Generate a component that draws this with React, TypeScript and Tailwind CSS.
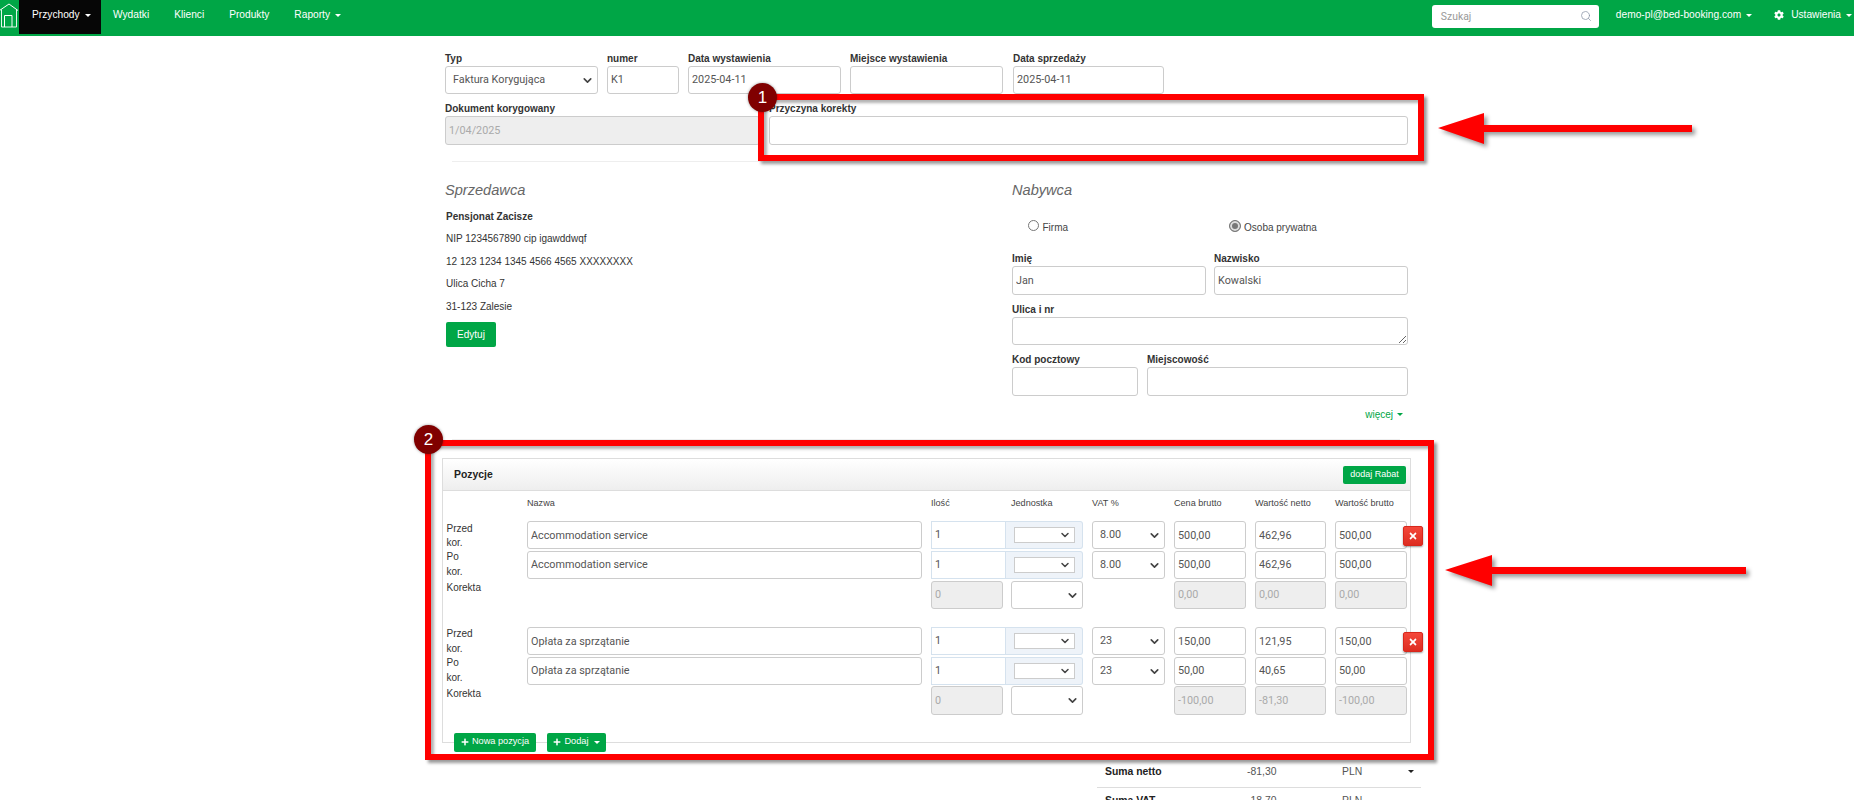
import React from "react";
import { FaCog, FaPlus, FaTimes } from "react-icons/fa";
import { Search, ChevronDown } from "lucide-react";

const Caret = ({ c = "border-t-white", cls = "" }: { c?: string; cls?: string }) => (
  <span className={`inline-block w-0 h-0 border-x-[3px] border-t-[3px] border-x-transparent ${c} ${cls}`} />
);

const inputBase =
  "w-full h-full rounded-[3px] border border-[#ccc] px-[3px] text-[10.8px] [font-family:Roboto,sans-serif] outline-none";

const Input = ({ value = "", dis = false, cls = "h-[29px]", w = "w-full" }: { value?: string; dis?: boolean; cls?: string; w?: string }) => (
  <div className={`${w} ${cls}`}>
    <input readOnly value={value} className={`${inputBase} ${dis ? "bg-[#eee] text-[#aaa]" : "bg-white text-[#555]"}`} />
  </div>
);

const Select = ({ value = "", cls = "h-[29px]", w = "w-full", pl = "pl-[7px]" }: { value?: string; cls?: string; w?: string; pl?: string }) => (
  <div className={`relative ${w} ${cls}`}>
    <select
      defaultValue={value}
      className={`${inputBase} ${pl} bg-white text-[#555] appearance-none`}
    >
      <option>{value}</option>
    </select>
    <ChevronDown size={13} strokeWidth={3} className="absolute right-[4px] top-[8px] text-[#444] pointer-events-none" />
  </div>
);

const Label = ({ children }: { children: React.ReactNode }) => (
  <div className="h-[14px] leading-[14px] text-[10px] text-[#333] whitespace-nowrap font-bold">{children}</div>
);

const Field = ({ label, w, children }: { label: string; w: string; children: React.ReactNode }) => (
  <div className={`${w} shrink-0`}>
    <Label>{label}</Label>
    {children}
  </div>
);

const NavItem = ({ label, caret = false, ml = "" }: { label: string; caret?: boolean; ml?: string }) => (
  <span className={`text-white text-[10.2px] ${ml} flex items-center gap-[5px] h-[30px] whitespace-nowrap`}>
    {label}
    {caret && <Caret />}
  </span>
);

const rowH = "h-[28.3px]";

const Unit = () => (
  <div className={`flex ${rowH} w-full`}>
    <div className="w-[75px] h-full border border-[#d5e2ee] flex items-center px-[3px] text-[10.8px] text-[#555] [font-family:Roboto,sans-serif] bg-white">1</div>
    <div className="flex-1 h-full border border-l-0 border-[#d5e2ee] bg-[#eef3f9] flex items-center justify-center rounded-r-[3px]">
      <div className="relative w-[61px] h-[16px] border border-[#ccc] bg-white">
        <ChevronDown size={12} strokeWidth={3} className="absolute right-[3px] top-[1px] text-[#444]" />
      </div>
    </div>
  </div>
);

type Item = {
  name: string;
  vat: string;
  before: [string, string, string];
  after: [string, string, string];
  diff: [string, string, string];
};

const cols = "grid grid-cols-[75px_395px_152px_73px_72px_71px_72px] gap-x-[9px]";

const PositionItem = ({ item }: { item: Item }) => (
  <div className={`relative ${cols}`}>
    <div className="pl-[3.5px] text-[10px] text-[#333] leading-[14.4px] mt-[0.5px]">
      <div className="w-[30px]">Przed kor.</div>
      <div className="w-[30px]">Po kor.</div>
      <div className="mt-[1.5px]">Korekta</div>
    </div>
    <div className="flex flex-col gap-[1.5px]">
      <Input value={item.name} cls={rowH} />
      <Input value={item.name} cls={rowH} />
    </div>
    <div className="flex flex-col gap-[1.5px]">
      <Unit />
      <Unit />
      <div className={`flex ${rowH} justify-between`}>
        <Input value="0" dis w="w-[72px]" cls="h-full" />
        <Select w="w-[72px]" cls="h-full" />
      </div>
    </div>
    <div className="flex flex-col gap-[1.5px]">
      <Select value={item.vat} cls={rowH} />
      <Select value={item.vat} cls={rowH} />
    </div>
    {[0, 1, 2].map((i) => (
      <div key={i} className="flex flex-col gap-[1.5px]">
        <Input value={item.before[i]} cls={rowH} />
        <Input value={item.after[i]} cls={rowH} />
        <Input value={item.diff[i]} dis cls={rowH} />
      </div>
    ))}
    <button className="absolute left-[960px] top-[5px] w-[20px] h-[20px] rounded-[2px] bg-gradient-to-b from-[#f4473a] to-[#dd2c20] border border-[#d8271c] shadow-[0_1px_2px_rgba(0,0,0,0.4)] flex items-center justify-center text-white">
      <FaTimes size={10} />
    </button>
  </div>
);

const Badge = ({ n, cls }: { n: string; cls: string }) => (
  <div className={`absolute w-[29px] h-[29px] rounded-full bg-[#800000] text-white flex items-center justify-center text-[17px] shadow-[0_0_3px_rgba(0,0,0,0.4)] ${cls}`}>
    {n}
  </div>
);

const items: Item[] = [
  {
    name: "Accommodation service",
    vat: "8.00",
    before: ["500,00", "462,96", "500,00"],
    after: ["500,00", "462,96", "500,00"],
    diff: ["0,00", "0,00", "0,00"],
  },
  {
    name: "Opłata za sprzątanie",
    vat: "23",
    before: ["150,00", "121,95", "150,00"],
    after: ["50,00", "40,65", "50,00"],
    diff: ["-100,00", "-81,30", "-100,00"],
  },
];

const boxShadow = "shadow-[3px_3px_3px_rgba(0,0,0,0.4),inset_3px_3px_3px_rgba(0,0,0,0.3)]";

export default function App() {
  return (
    <div className="relative w-[1854px] h-[800px] overflow-hidden bg-white [font-family:Liberation_Sans,Arial,sans-serif] text-[#333]">
      {/* Top bar */}
      <nav className="h-9 bg-[#00a646] flex items-start">
        <svg viewBox="0 0 19 30" className="w-[19px] h-[30px] shrink-0 mt-[3px]" fill="none" stroke="#fff" strokeWidth="1">
          <path d="M-0.5 7.5 L9 1 L18 7.5" />
          <path d="M1.5 6.5 V24 H16.5 V6.5" strokeOpacity="0.9" />
          <path d="M4.5 24 V12.5 H12 V24" />
        </svg>
        <div className="bg-[#060606] h-[34px] w-[82px] pl-[13px] flex items-start">
          <NavItem label="Przychody" caret />
        </div>
        <NavItem label="Wydatki" ml="ml-[12px]" />
        <NavItem label="Klienci" ml="ml-[25px]" />
        <NavItem label="Produkty" ml="ml-[25px]" />
        <NavItem label="Raporty" caret ml="ml-[25px]" />
        <div className="ml-auto flex items-start">
          <div className="relative w-[167px] h-[23px] mt-[5px] bg-white rounded-[3px] flex items-center pl-[9px] text-[10.4px] text-[#999] [font-family:Roboto,sans-serif]">
            Szukaj
            <Search size={12} strokeWidth={1.5} className="absolute right-[7px] top-[5px] text-[#8a94a6]" />
          </div>
          <NavItem label="demo-pl@bed-booking.com" caret ml="ml-[17px]" />
          <span className="ml-[22px] h-[30px] flex items-center text-white">
            <FaCog size={10} />
          </span>
          <NavItem label="Ustawienia" caret ml="ml-[7px] mr-[2px]" />
        </div>
      </nav>

      <main className="ml-[445px] w-[963px]">
        {/* Document header */}
        <div className="flex pt-[15.5px]">
          <Field label="Typ" w="w-[153px] mr-[9px]">
            <Select value="Faktura Korygująca" cls="h-[28px]" />
          </Field>
          <Field label="numer" w="w-[72px] mr-[9px]">
            <Input value="K1" cls="h-[28px]" />
          </Field>
          <Field label="Data wystawienia" w="w-[153px] mr-[9px]">
            <Input value="2025-04-11" cls="h-[28px]" />
          </Field>
          <Field label="Miejsce wystawienia" w="w-[153px] mr-[10px]">
            <Input cls="h-[28px]" />
          </Field>
          <Field label="Data sprzedaży" w="w-[151px]">
            <Input value="2025-04-11" cls="h-[28px]" />
          </Field>
        </div>
        <div className="flex mt-[8.5px] gap-[9px]">
          <Field label="Dokument korygowany" w="w-[315px]">
            <Input value="1/04/2025" dis />
          </Field>
          <Field label="Przyczyna korekty" w="w-[639px]">
            <Input />
          </Field>
        </div>
        <div className="mt-[16px] ml-[7px] w-[310px] h-px bg-[#eee]" />

        {/* Parties */}
        <div className="flex mt-[18px]">
          <section className="w-[567px] shrink-0">
            <h2 className="h-[20px] leading-[20px] text-[14.6px] italic text-[#666]">Sprzedawca</h2>
            <div className="mt-[5.5px] pl-px text-[10px] text-[#333] leading-[22.5px]">
              <div className="font-bold">Pensjonat Zacisze</div>
              <div>NIP 1234567890 cip igawddwqf</div>
              <div>12 123 1234 1345 4566 4565 XXXXXXXX</div>
              <div>Ulica Cicha 7</div>
              <div>31-123 Zalesie</div>
            </div>
            <button className="mt-[4px] ml-px w-[50px] h-[25px] bg-[#00a646] text-white rounded-[2px] text-[10px]">Edytuj</button>
          </section>
          <section className="w-[396px] shrink-0">
            <h2 className="h-[20px] leading-[20px] text-[14.6px] italic text-[#666]">Nabywca</h2>
            <div className="mt-[20px] h-[14px] flex items-center text-[10px] text-[#444]">
              <input type="radio" readOnly className="appearance-none ml-[15.5px] w-[11px] h-[11px] rounded-full border border-[#777] bg-white -mt-[3px]" />
              <span className="ml-[4px] mt-[1.5px]">Firma</span>
              <input type="radio" readOnly className="appearance-none ml-[161px] w-[12px] h-[12px] rounded-full border border-[#777] bg-[#777] shadow-[inset_0_0_0_2px_#ddd] -mt-[3px]" />
              <span className="ml-[3px] mt-[1.5px]">Osoba prywatna</span>
            </div>
            <div className="mt-[18px] flex gap-[8px]">
              <Field label="Imię" w="w-[194px]">
                <Input value="Jan" />
              </Field>
              <Field label="Nazwisko" w="w-[194px]">
                <Input value="Kowalski" />
              </Field>
            </div>
            <div className="mt-[8px]">
              <Label>Ulica i nr</Label>
              <textarea readOnly className="block w-full h-[28px] rounded-[3px] border border-[#ccc] outline-none" />
            </div>
            <div className="mt-[8px] flex gap-[9px]">
              <Field label="Kod pocztowy" w="w-[126px]">
                <Input />
              </Field>
              <Field label="Miejscowość" w="w-[261px]">
                <Input />
              </Field>
            </div>
            <div className="mt-[11px] h-[14px] pr-[5px] flex items-center justify-end gap-[4px] text-[10px] text-[#00a646]">
              więcej
              <Caret c="border-t-[#00a646]" />
            </div>
          </section>
        </div>
        <div className="mt-[18px] ml-[7px] w-[948px] h-px bg-[#eee]" />

        {/* Positions */}
        <div className="-ml-[3px] mt-[18px] w-[969px] border border-[#ddd]">
          <div className="h-[32px] bg-gradient-to-b from-white to-[#eee] border-b border-[#ddd] flex items-center justify-between pl-[11px] pr-[4px]">
            <span className="font-bold text-[10.4px] text-[#222]">Pozycje</span>
            <button className="w-[63px] h-[18px] bg-[#00a646] rounded-[2px] text-white text-[9px]">dodaj Rabat</button>
          </div>
          <div className="pt-[6px] pb-[27px]">
            <div className={`h-[14px] ${cols} items-center text-[9.1px] text-[#444] whitespace-nowrap`}>
              <span />
              <span>Nazwa</span>
              <span className="flex">
                <span className="w-[80px]">Ilość</span>
                <span>Jednostka</span>
              </span>
              <span>VAT %</span>
              <span>Cena brutto</span>
              <span>Wartość netto</span>
              <span>Wartość brutto</span>
            </div>
            <div className="mt-[10px]">
              <PositionItem item={items[0]} />
            </div>
            <div className="mt-[18px]">
              <PositionItem item={items[1]} />
            </div>
          </div>
        </div>
        <div className="relative -mt-[10px] ml-[9px] flex gap-[11px] text-white text-[9.2px]">
          <button className="w-[82px] h-[19px] bg-[#00a646] rounded-[2px] flex items-center justify-center gap-[3px]">
            <FaPlus size={8} />
            Nowa pozycja
          </button>
          <button className="w-[59px] h-[19px] bg-[#00a646] rounded-[2px] flex items-center justify-center gap-[3px]">
            <FaPlus size={8} />
            Dodaj
            <Caret cls="ml-[2px]" />
          </button>
        </div>

        {/* Totals */}
        <div className="ml-[652px] w-[324px] mt-[5px] text-[10.4px]">
          <div className="h-[31px] flex items-center border-b border-[#ddd] pl-[8px]">
            <span className="w-[142px] font-bold text-[#222]">Suma netto</span>
            <span className="w-[95px] text-[#555]">-81,30</span>
            <span className="w-[66px] text-[#555]">PLN</span>
            <Caret c="border-t-[#222]" />
          </div>
          <div className="h-[27px] flex items-center pl-[8px]">
            <span className="w-[142px] font-bold text-[#222]">Suma VAT</span>
            <span className="w-[95px] text-[#555]">-18,70</span>
            <span className="w-[66px] text-[#555]">PLN</span>
          </div>
        </div>
      </main>

      {/* Annotations */}
      <div className={`absolute left-[758px] top-[94px] w-[666px] h-[67px] border-[6px] border-[#ff0000] ${boxShadow}`} />
      <Badge n="1" cls="left-[748px] top-[83px]" />
      <svg viewBox="0 0 254 31" className="absolute left-[1438px] top-[113px] w-[254px] h-[31px] drop-shadow-[3px_3px_2px_rgba(0,0,0,0.4)]" fill="#ff0000">
        <path d="M0 15 L46 0 L46 12 L254 12 L254 19 L46 19 L46 31 Z" />
      </svg>
      <div className={`absolute left-[425px] top-[440px] w-[1009px] h-[320px] border-[6px] border-[#ff0000] ${boxShadow}`} />
      <Badge n="2" cls="left-[414px] top-[425px]" />
      <svg viewBox="0 0 301 31" className="absolute left-[1445px] top-[555px] w-[301px] h-[31px] drop-shadow-[3px_3px_2px_rgba(0,0,0,0.4)]" fill="#ff0000">
        <path d="M0 15 L47 0 L47 12 L301 12 L301 19 L47 19 L47 31 Z" />
      </svg>
    </div>
  );
}
